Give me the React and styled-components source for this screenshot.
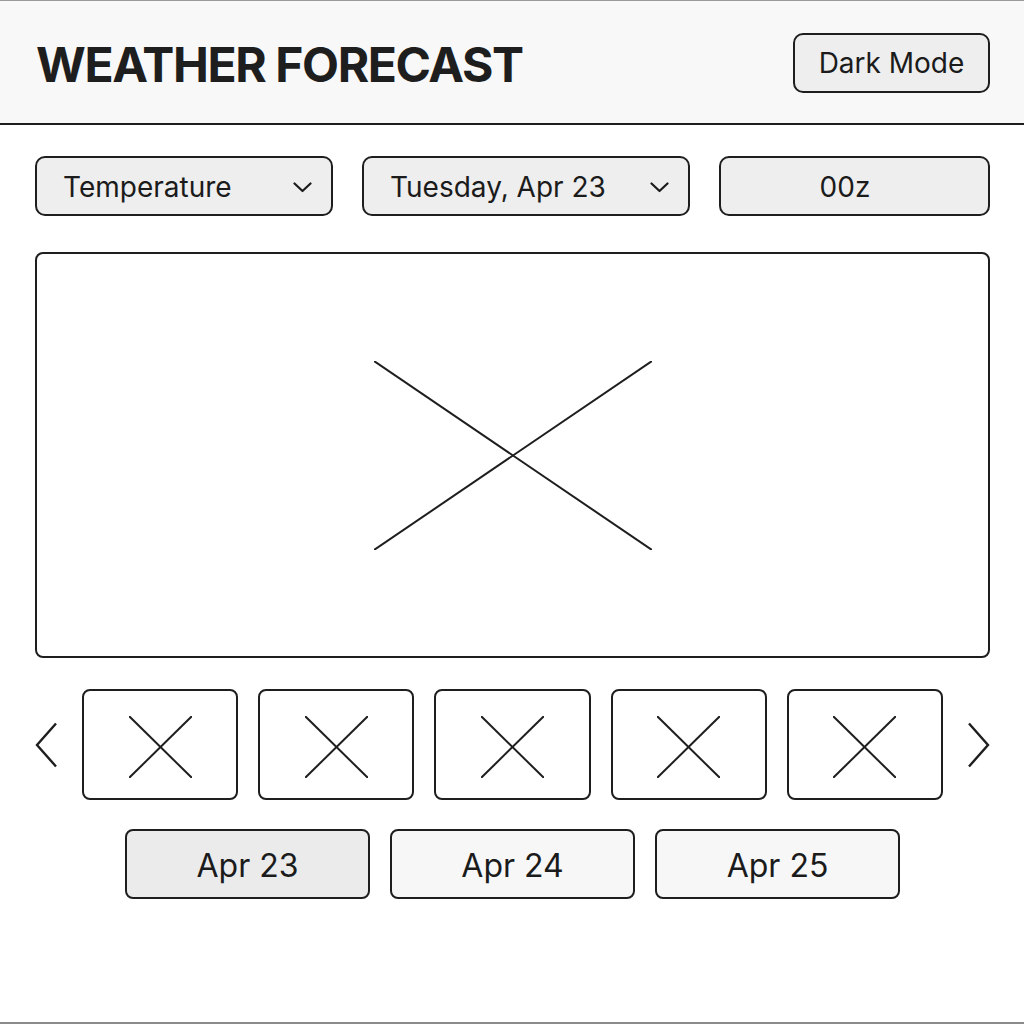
import React from "react";
import styled, { createGlobalStyle } from "styled-components";

const GlobalStyle = createGlobalStyle`
  html, body {
    margin: 0;
    padding: 0;
    background: #fff;
  }
  body {
    font-family: Inter, "Noto Sans", "Liberation Sans", sans-serif;
    color: #1b1b1b;
  }
  * {
    box-sizing: border-box;
  }
`;

const Page = styled.div`
  width: 1024px;
  height: 1024px;
  border-top: 1px solid #9a9a9a;
  border-bottom: 2px solid #8a8a8a;
  background: #fff;
  display: flex;
  flex-direction: column;
`;

const Header = styled.header`
  height: 124px;
  background: #f8f8f8;
  border-bottom: 2px solid #1e1e1e;
  display: flex;
  align-items: center;
  justify-content: space-between;
  padding: 0 34px 0 36px;
`;

const Title = styled.h1`
  margin: 0;
  font-size: 48px;
  font-weight: 700;
  letter-spacing: -1.4px;
  color: #1e1e1e;
  padding-top: 4px;
`;

const ModeButton = styled.button`
  width: 197px;
  height: 60px;
  margin-top: 1px;
  border: 2px solid #1e1e1e;
  border-radius: 10px;
  background: #eeeeee;
  font-family: inherit;
  font-size: 28px;
  color: #1b1b1b;
  padding: 0;
`;

const Main = styled.main`
  padding: 31px 34px 0 35px;
  display: flex;
  flex-direction: column;
`;

const Controls = styled.div`
  display: grid;
  grid-template-columns: 298px 328px 1fr;
  column-gap: 29px;
`;

const Field = styled.div`
  height: 60px;
  border: 2px solid #1e1e1e;
  border-radius: 10px;
  background: #eeeeee;
  display: flex;
  align-items: center;
  justify-content: ${(p) => (p.$center ? "center" : "space-between")};
  padding: 2px 19px 0 ${(p) => (p.$center ? "0" : "26px")};
  font-size: 28px;
  color: #1b1b1b;
`;

const Chevron = () => (
  <svg width="19" height="11" viewBox="0 0 19 11" fill="none">
    <polyline
      points="1.5,1.5 9.5,9 17.5,1.5"
      stroke="#1b1b1b"
      strokeWidth="2.2"
      strokeLinecap="round"
      strokeLinejoin="round"
    />
  </svg>
);

const MapPanel = styled.section`
  margin-top: 36px;
  height: 406px;
  border: 2px solid #1e1e1e;
  border-radius: 8px;
  background: #fff;
  display: flex;
  align-items: center;
  justify-content: center;
`;

const Cross = ({ w, h, stroke = 2 }) => (
  <svg width={w} height={h} viewBox={`0 0 ${w} ${h}`} fill="none">
    <line x1="0" y1="0" x2={w} y2={h} stroke="#1e1e1e" strokeWidth={stroke} />
    <line x1="0" y1={h} x2={w} y2="0" stroke="#1e1e1e" strokeWidth={stroke} />
  </svg>
);

const Strip = styled.div`
  margin-top: 31px;
  height: 111px;
  display: grid;
  grid-template-columns: 27px repeat(5, 1fr) 27px;
  column-gap: 20px;
  align-items: center;
`;

const Arrow = styled.button`
  width: 22px;
  height: 46px;
  padding: 0;
  border: none;
  background: none;
  display: flex;
  align-items: center;
  justify-content: center;
  justify-self: ${(p) => (p.$right ? "end" : "start")};
`;

const Thumb = styled.div`
  height: 111px;
  border: 2px solid #1e1e1e;
  border-radius: 8px;
  background: #fff;
  display: flex;
  align-items: center;
  justify-content: center;
  padding-top: 4px;
`;

const Dates = styled.div`
  margin-top: 29px;
  display: flex;
  justify-content: center;
  gap: 20px;
`;

const DateButton = styled.button`
  width: 245px;
  height: 70px;
  border: 2px solid #1e1e1e;
  border-radius: 8px;
  background: ${(p) => (p.$active ? "#ebebeb" : "#f7f7f7")};
  font-family: inherit;
  font-size: 32px;
  color: #1b1b1b;
  padding: 2px 0 0;
`;

const thumbs = [0, 1, 2, 3, 4];
const dates = ["Apr 23", "Apr 24", "Apr 25"];

export default function App() {
  return (
    <Page>
      <GlobalStyle />
      <Header>
        <Title>WEATHER FORECAST</Title>
        <ModeButton>Dark Mode</ModeButton>
      </Header>
      <Main>
        <Controls>
          <Field>
            Temperature
            <Chevron />
          </Field>
          <Field>
            Tuesday, Apr 23
            <Chevron />
          </Field>
          <Field $center>00z</Field>
        </Controls>
        <MapPanel>
          <Cross w={278} h={189} />
        </MapPanel>
        <Strip>
          <Arrow aria-label="Previous">
            <svg width="22" height="46" viewBox="0 0 22 46" fill="none">
              <polyline points="21,1.5 2,23 21,44.5" stroke="#1e1e1e" strokeWidth="2.4" />
            </svg>
          </Arrow>
          {thumbs.map((t) => (
            <Thumb key={t}>
              <Cross w={63} h={62} />
            </Thumb>
          ))}
          <Arrow $right aria-label="Next">
            <svg width="22" height="46" viewBox="0 0 22 46" fill="none">
              <polyline points="1,1.5 20,23 1,44.5" stroke="#1e1e1e" strokeWidth="2.4" />
            </svg>
          </Arrow>
        </Strip>
        <Dates>
          {dates.map((d, i) => (
            <DateButton key={d} $active={i === 0}>
              {d}
            </DateButton>
          ))}
        </Dates>
      </Main>
    </Page>
  );
}
